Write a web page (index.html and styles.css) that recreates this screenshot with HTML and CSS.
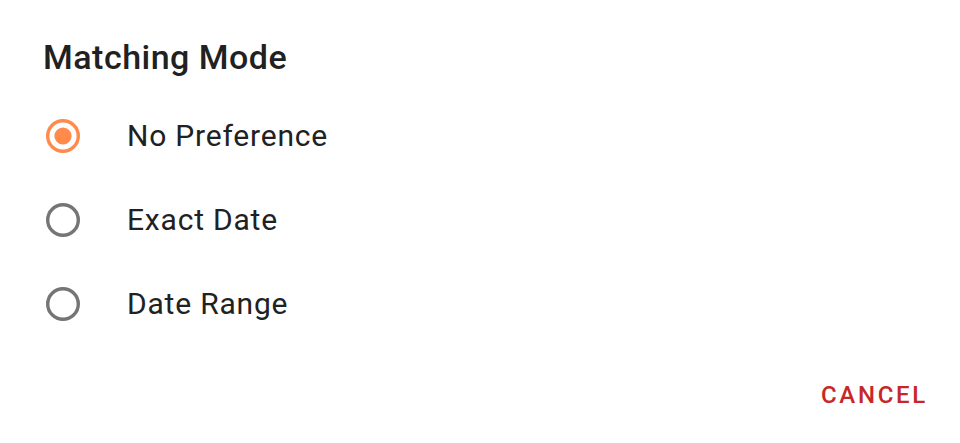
FILE: index.html
```html
<!DOCTYPE html>
<html>
<head>
<meta charset="utf-8">
<link rel="stylesheet" href="styles.css">
</head>
<body>
<div class="dialog">
  <h1 class="title">Matching Mode</h1>
  <div class="options">
    <div class="option">
      <svg class="radio" viewBox="0 0 34 34" width="34" height="34"><circle cx="17" cy="17" r="15.3" fill="none" stroke="#ff8a4c" stroke-width="3.4"/><circle cx="17" cy="17" r="8.6" fill="#ff8a4c"/></svg>
      <span class="label">No Preference</span>
    </div>
    <div class="option">
      <svg class="radio" viewBox="0 0 34 34" width="34" height="34"><circle cx="17" cy="17" r="15.3" fill="none" stroke="#757575" stroke-width="3.4"/></svg>
      <span class="label">Exact Date</span>
    </div>
    <div class="option">
      <svg class="radio" viewBox="0 0 34 34" width="34" height="34"><circle cx="17" cy="17" r="15.3" fill="none" stroke="#757575" stroke-width="3.4"/></svg>
      <span class="label">Date Range</span>
    </div>
  </div>
  <div class="actions">
    <span class="btn">CANCEL</span>
  </div>
</div>
</body>
</html>
```
FILE: styles.css
```css
html, body {
  margin: 0;
  padding: 0;
  background: #ffffff;
}
.dialog {
  width: 960px;
  height: 443px;
  font-family: Roboto, "Noto Sans", sans-serif;
  color: #212121;
  display: flex;
  flex-direction: column;
}
.title {
  margin: 0;
  padding: 37px 0 0 43px;
  font-size: 34px;
  line-height: 40px;
  font-weight: 500;
  letter-spacing: 0.5px;
}
.options {
  margin-top: 17px;
  display: flex;
  flex-direction: column;
}
.option {
  height: 84px;
  display: flex;
  align-items: center;
  padding-left: 46px;
  gap: 47px;
}
.radio {
  display: block;
  flex: none;
}
.label {
  font-size: 30px;
  line-height: 34px;
  letter-spacing: 0.8px;
}
.actions {
  margin-top: 34px;
  display: flex;
  justify-content: flex-end;
  padding-right: 32px;
}
.btn {
  font-size: 24px;
  line-height: 30px;
  font-weight: 500;
  letter-spacing: 2.7px;
  color: #c62828;
}
```
